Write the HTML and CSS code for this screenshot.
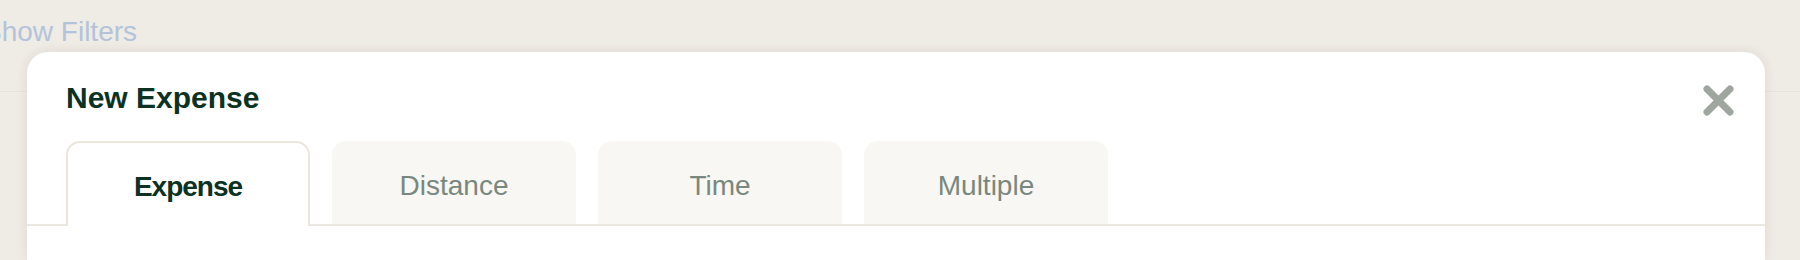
FILE: index.html
```html
<!DOCTYPE html>
<html>
	<head>
		<meta charset="utf-8">
		<title>New Expense</title>
		<link rel="stylesheet" href="styles.css">
	</head>
	<body>
		<div class="page_head">
			<a class="page_head__filters" href="#">Show Filters</a>
		</div>
		<div class="modal" role="dialog">
			<div class="modal__head">
				<h1>New Expense</h1>
				<button type="button" class="modal__close" aria-label="Close">
					<svg width="31" height="31" viewBox="0 0 31 31"><path d="M4 4 L27 27 M27 4 L4 27" stroke="#9ea69f" stroke-width="7" stroke-linecap="round" fill="none"/></svg>
				</button>
			</div>
			<ul class="modal_tab">
				<li class="on"><button type="button"><span>Expense</span></button></li>
				<li><button type="button"><span>Distance</span></button></li>
				<li><button type="button"><span>Time</span></button></li>
				<li><button type="button"><span>Multiple</span></button></li>
			</ul>
			<div class="modal__body"></div>
		</div>
	</body>
</html>
```

FILE: styles.css
```css
html, body, ul, li, h1, button { margin:0; padding:0; }
ul, li { list-style:none; }
body { background-color:#efebe5; font-family:"Liberation Sans", Arial, sans-serif; height:260px; overflow:hidden; }
.page_head { height:92px; border-bottom:1px solid #e7e2db; padding-top:16px; box-sizing:border-box; }
.page_head__filters { display:inline-block; margin-left:-17px; font-size:28px; line-height:32px; color:#b3c4da; text-decoration:none; }
.modal { position:absolute; left:27px; top:52px; width:1738px; height:208px; background-color:#fff; border-radius:21px 21px 0 0; box-shadow:0 0 12px rgba(80,60,30,0.10); }
.modal__head { display:flex; justify-content:space-between; align-items:flex-start; padding:28px 31px 0 39px; }
.modal__head h1 { font-size:30px; line-height:36px; font-weight:bold; color:#0b3222; }
.modal__close { display:block; margin-top:5px; border:0; background:none; cursor:pointer; }
.modal__close svg { display:block; }
.modal_tab { display:flex; gap:22px; margin-top:25px; padding-left:39px; border-bottom:2px solid #ebe8e2; }
.modal_tab li button { display:block; width:244px; height:83px; padding:29px 0 22px; box-sizing:border-box; border:0; border-radius:14px 14px 0 0; background-color:#f8f7f3; font-family:inherit; font-size:28px; line-height:32px; color:#78887e; text-align:center; }
.modal_tab li.on button { height:85px; margin-bottom:-2px; border:2px solid #ebe6dd; border-bottom:0; padding-top:27px; background-color:#fff; color:#0b3222; font-weight:bold; letter-spacing:-1px; }
```
